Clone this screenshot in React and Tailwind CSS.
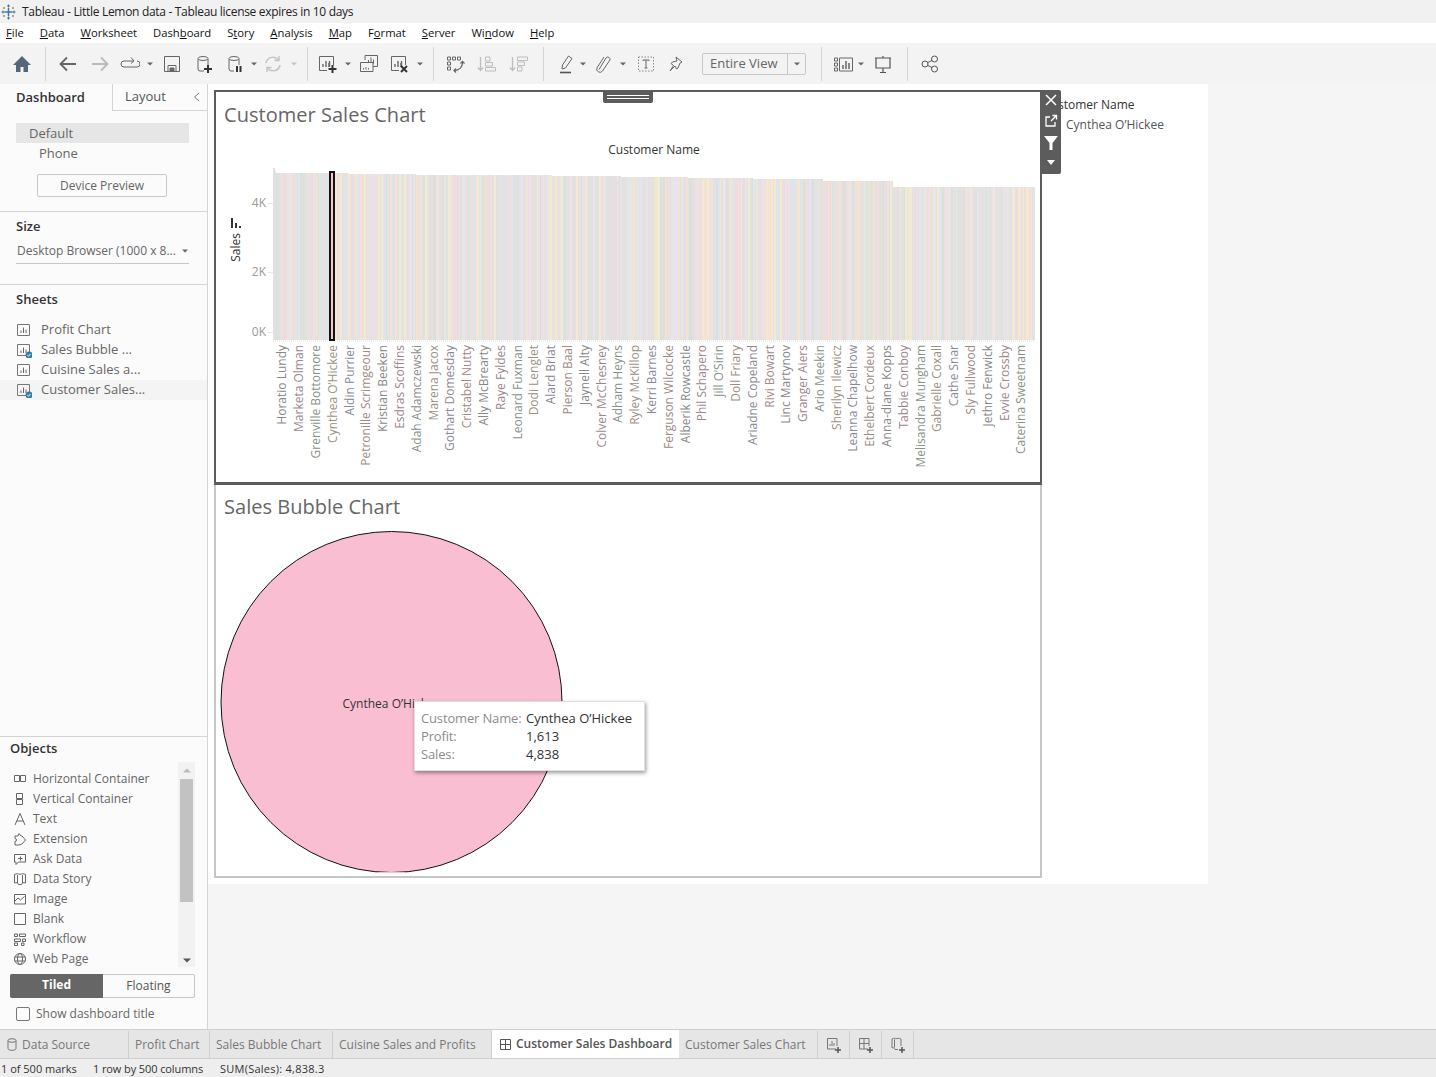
import React from 'react';

// Names shown on the x axis, colour classes cycle over them
const names = [
  'Horatio Lundy', 'Marketa Olman', 'Grenville Bottomore', 'Cynthea O\u2019Hickee', 'Aldin Purrier',
  'Petronille Scrimgeour', 'Kristian Beeken', 'Esdras Scoffins', 'Adah Adamczewski', 'Marena Jacox',
  'Gothart Domesday', 'Cristabel Nutty', 'Ally McBrearty', 'Raye Fyldes', 'Leonard Fuxman',
  'Dodi Lenglet', 'Alard Briat', 'Pierson Baal', 'Jaynell Alty', 'Colver McChesney',
  'Adham Heyns', 'Ryley McKillop', 'Kerri Barnes', 'Ferguson Wilcocke', 'Alberik Rowcastle',
  'Phil Schapero', 'Jill O\u2019Sirin', 'Doll Friary', 'Ariadne Copeland', 'Rivi Bowart',
  'Linc Martynov', 'Granger Aiers', 'Ario Meekin', 'Sherilyn Ilewicz', 'Leanna Chapelhow',
  'Ethelbert Cordeux', 'Anna-diane Kopps', 'Tabbie Conboy', 'Melisandra Mungham', 'Gabrielle Coxall',
  'Cathe Snar', 'Sly Fullwood', 'Jethro Fenwick', 'Evvie Crossby', 'Caterina Sweetnam',
];
const labelColors = ['text-[#888888]', 'text-[#9c868d]', 'text-[#87938a]', 'text-[#9a9283]', 'text-[#8a8997]', 'text-[#a08986]'];

const barColors = ['#e3e3e3', '#e6e6e6', '#e1e1e4', '#f1dcdc', '#dde4da', '#f1ebd4', '#e7dde4', '#dde4ea', '#f4e2d2', '#d8e2da', '#e8e4ea', '#eedfe2'];

// top of the bars, in steps, as in the sorted chart
const barTop = (x) => {
  if (x < 1) return 168;
  if (x < 3) return 171;
  if (x < 76) return 172.7;
  if (x < 143) return 174;
  if (x < 278) return 175;
  if (x < 346) return 176;
  if (x < 414) return 177;
  if (x < 480) return 178;
  if (x < 550) return 179;
  if (x < 620) return 181;
  return 187;
};

const bars = [];
let seed = 17;
for (let i = 0; i < 500; i++) {
  seed = (Math.imul(seed, 1664525) + 1013904223) >>> 0;
  bars.push({ x: i * 1.524, color: barColors[(seed >>> 24) % barColors.length] });
}

const Ico = ({ children, w = 20, h = 20, stroke = '#666', className = '' }) => (
  <svg width={w} height={h} viewBox={`0 0 ${w} ${h}`} fill="none" stroke={stroke} strokeWidth="1" className={`shrink-0 ${className}`}>
    {children}
  </svg>
);

const Caret = ({ className = '', color = '#666' }) => (
  <svg width="6" height="4" viewBox="0 0 6 4" className={`shrink-0 ${className}`}><path d="M0 0.5h6L3 3.5z" fill={color} /></svg>
);

const Sep = ({ className = '' }) => <div className={`w-px h-[34px] bg-[#d4d4d4] shrink-0 ${className}`} />;

const BarGlyph = ({ x = 5, y = 12, color = '#666' }) => (
  <path d={`M${x} ${y}v-3M${x + 3} ${y}v-6M${x + 6} ${y}v-4`} stroke={color} strokeWidth="1.4" />
);

const Plus = ({ x, y }) => <path d={`M${x - 4} ${y}h8M${x} ${y - 4}v8`} stroke="#333" strokeWidth="2" />;

const Toolbar = () => (
  <div className="h-[41px] bg-[#f3f3f3] flex items-center shrink-0">
    <Ico className="ml-[12px]" stroke="none"><path d="M10 2 1 11h3v7h4.500v-5h3v5H16v-7h3z" fill="#546778" /></Ico>
    <Sep className="ml-[13px]" />
    <Ico className="ml-[12px]" stroke="#666"><path d="M18 10H3M9 3.500 2.500 10 9 16.500" strokeWidth="1.800" /></Ico>
    <Ico className="ml-[12px]" stroke="#bbb"><path d="M2 10h15M11 3.500 17.500 10 11 16.500" strokeWidth="1.800" /></Ico>
    <Ico className="ml-[10px]"><path d="M13 7H4a3 3 0 0 0 0 6h13a2.500 2.500 0 0 0 0-6" /><path d="M11 3.500 14 7l-3 2.500" /></Ico>
    <Caret className="ml-[7px]" />
    <Ico className="ml-[9px]"><path d="M2.500 2.500h15v15h-15z" /><path d="M6 17.500v-6h8v6" /><path d="M8 14h4v3.500H8z" fill="#666" /></Ico>
    <Ico className="ml-[12px]"><path d="M4 5v10a2 2 0 0 0 2 2h4M14 5v6" /><ellipse cx="9" cy="4.500" rx="5" ry="2" /><Plus x={14} y={15} /></Ico>
    <Ico className="ml-[11px]"><path d="M4 5v10a2 2 0 0 0 2 2h3M14 5v6" /><ellipse cx="9" cy="4.500" rx="5" ry="2" /><path d="M12 12v6M15.500 12v6" stroke="#333" strokeWidth="2" /></Ico>
    <Caret className="ml-[6px]" />
    <Ico className="ml-[6px]" stroke="#c4c4c4"><path d="M3 9a7 7 0 0 1 12.500-3M17 11a7 7 0 0 1-12.500 3" strokeWidth="1.500" /><path d="M16 2v4.500h-4.500M4 18v-4.500h4.500" strokeWidth="1.500" /></Ico>
    <Caret className="ml-[8px]" color="#c4c4c4" />
    <Sep className="ml-[10px]" />
    <Ico className="ml-[10px]"><path d="M15.500 11V2.500h-14v14H9" /><BarGlyph x={5} y={13} /><path d="M11.500 13V7" strokeWidth="1.400" /><Plus x={14.500} y={15} /></Ico>
    <Caret className="ml-[7px]" />
    <Ico className="ml-[8px]"><path d="M6 6V1.500h12.500v11H14" /><path d="M9.500 9.500V6M12 9.500V3.500M14.500 9.500V5.500" strokeWidth="1" /><path d="M1.500 8.500H14v9H1.500z" fill="#f3f3f3" /><path d="M4.500 15.500V14M7 15.500V13M9.500 15.500v-1.500" strokeWidth="1" /></Ico>
    <Ico className="ml-[11px]"><path d="M15.500 11V2.500h-14v14H9" /><BarGlyph x={5} y={13} /><path d="M11.500 13V7" strokeWidth="1.400" /><path d="M11 12l6 6M17 12l-6 6" stroke="#333" strokeWidth="2" /></Ico>
    <Caret className="ml-[7px]" />
    <Sep className="ml-[10px]" />
    <Ico className="ml-[11px]"><path d="M2.500 3h3v3h-3zM7.500 3h3v3h-3zM12.500 3h3v3h-3zM2.500 8h3v3h-3zM2.500 13h3v3h-3z" /><path d="M17.500 8c0 5-3 8.500-8.500 8.500" strokeWidth="1.300" /><path d="M15.500 9.500l2-2 2 2M11 14.500l-2 2 2 2" strokeWidth="1.300" /></Ico>
    <Ico className="ml-[12px]" stroke="#bdbdbd"><path d="M3.500 3v13M1 13.500 3.500 16.500 6 13.500" strokeWidth="1.300" /><path d="M8.500 3h4.500v4H8.500zM8.500 8.500h7v3.500h-7zM8.500 13.500h10v3.500h-10z" /></Ico>
    <Ico className="ml-[12px]" stroke="#bdbdbd"><path d="M3.500 3v13M1 13.500 3.500 16.500 6 13.500" strokeWidth="1.300" /><path d="M8.500 3h10v3.500h-10zM8.500 8h7v3.500h-7zM8.500 13h4.500v4H8.500z" /></Ico>
    <Sep className="ml-[14px]" />
    <Ico className="ml-[12px]"><path d="M12.500 2 16 4.500 9.500 14 6 15l.5-4z" /><path d="M4 18.500h11" stroke="#555" strokeWidth="1.600" /></Ico>
    <Caret className="ml-[4px]" />
    <Ico className="ml-[7px]"><path d="M6 15.500 13 4a2.200 2.200 0 0 1 3.800 2.200L9.500 17a3.200 3.200 0 0 1-5.500-3.200L11 3" /></Ico>
    <Caret className="ml-[7px]" />
    <Ico className="ml-[10px]"><path d="M2.500 3h15v14h-15z" strokeDasharray="1.500 1.500" stroke="#888" /><path d="M7 7V6h6v1M10 6v8M8.500 14h3" /></Ico>
    <Ico className="ml-[10px]"><path d="M10 3l6 5-2 1-2 5-1.500 1L9 12l-5 5 3.500-5.500L5 9.500l1.500-1.500 4.500-1z" /></Ico>
    <div className="ml-[16px] w-[104px] h-[22px] border border-[#c8c8c8] rounded-[2px] flex items-center shrink-0">
      <span className="pl-[7px] w-[84px] text-[13px] text-[#666]">Entire View</span>
      <div className="flex-1 h-full border-l border-[#c8c8c8] flex items-center justify-center"><Caret /></div>
    </div>
    <Sep className="ml-[15px]" />
    <Ico className="ml-[11px]"><path d="M1.500 4h3v3h-3zM1.500 9h3v3h-3zM1.500 14h3v3h-3z" /><path d="M6.500 4h13v13h-13z" /><path d="M10 15v-4M13 15V7M16 15v-6" strokeWidth="1.500" /></Ico>
    <Caret className="ml-[5px]" />
    <Ico className="ml-[9px]" stroke="#555"><path d="M2 4h16M3 4v10h14V4M10 14v4M7 18.500h6M10 2v2" strokeWidth="1.200" /></Ico>
    <Sep className="ml-[14px]" />
    <Ico className="ml-[12px]" stroke="#555"><circle cx="5" cy="10" r="3" /><circle cx="14.500" cy="5" r="3" /><circle cx="14.500" cy="15" r="3" /><path d="M7.700 8.600 12 6.400M7.700 11.400 12 13.600" /></Ico>
  </div>
);

const menu = [
  ['', 'F', 'ile'], ['', 'D', 'ata'], ['', 'W', 'orksheet'], ['Dash', 'b', 'oard'], ['S', 't', 'ory'], ['', 'A', 'nalysis'],
  ['', 'M', 'ap'], ['F', 'o', 'rmat'], ['', 'S', 'erver'], ['Wi', 'n', 'dow'], ['', 'H', 'elp'],
];

const SheetIcon = ({ badge }) => (
  <svg width="16" height="16" viewBox="0 0 16 16" fill="none" className="shrink-0">
    <path d="M1.500 2.500h12v11h-12z" stroke="#777" />
    <path d="M5 11V8.500M7.500 11V5.500M10 11V7.500" stroke="#666" />
    {badge && <circle cx="13" cy="13" r="3.500" fill="#2f7fa8" />}
    {badge && <path d="M11.300 13l1.200 1.200 2-2.200" stroke="#fff" />}
  </svg>
);

const sheets = [
  { name: 'Profit Chart' },
  { name: 'Sales Bubble ...', badge: true },
  { name: 'Cuisine Sales a...' },
  { name: 'Customer Sales...', badge: true, active: true },
];

const objects = [
  ['Horizontal Container', <g key="a"><path d="M1.500 3.500h5v6h-5zM7.500 3.500h5v6h-5z" /></g>],
  ['Vertical Container', <g key="a"><path d="M3.500 1.500h6v5h-6zM3.500 7.500h6v5h-6z" /></g>],
  ['Text', <path key="a" d="M2 13 7 1.500 12 13M3.800 9h6.400" />],
  ['Extension', <path key="a" d="M2 13V9.500a1.500 1.500 0 0 0 0-3V4h3l1-2.500L8 4h1l3.500 4L9 12l-3 1z" />],
  ['Ask Data', <path key="a" d="M1.500 2.500h11v7.500H5.500L3 12.500V10H1.500zM5 6.500h4.500M7.500 4.500v4" />],
  ['Data Story', <path key="a" d="M1.500 2.500c2-1 4-1 5.500 0 1.500-1 3.500-1 5.500 0v8.500c-2-.5-3.500-.5-4 1.500h-3c-.5-2-2-2-4-1.500zM4.500 3v8M9.500 3v8" />],
  ['Image', <path key="a" d="M1.500 2.500h11v9.500h-11zM2 9l3-3 2.500 2 4-3.500" />],
  ['Blank', <path key="a" d="M1.500 1.500h11v11h-11z" />],
  ['Workflow', <path key="a" d="M1.500 2h3v2.500h-3zM6.500 2h6v2.500h-6zM1.500 7h6v2.500h-6zM9.500 7h3v2.500h-3zM1.500 11h3v2.500h-3zM8.500 11h2.500v2.500H8.500z" />],
  ['Web Page', <g key="a"><circle cx="7" cy="7" r="5.500" /><ellipse cx="7" cy="7" rx="2.500" ry="5.500" /><path d="M1.500 5h11M1.500 9h11" /></g>],
];

const Sidebar = () => (
  <div className="w-[208px] shrink-0 bg-[#fbfbfb] border-r border-[#d4d4d4] flex flex-col text-[12px] text-[#666]">
    <div className="h-[27px] flex shrink-0">
      <div className="w-[112px] pl-[16px] pt-[4px] font-semibold text-[13px] text-[#333]">Dashboard</div>
      <div className="flex-1 flex items-center justify-between border-l border-b border-[#d4d4d4] pl-[12px] pr-[7px]">
        <span className="text-[13px] text-[#555]">Layout</span>
        <svg width="7" height="10" viewBox="0 0 7 10" fill="none"><path d="M6 1 1.500 5 6 9" stroke="#777" /></svg>
      </div>
    </div>
    <div className="h-[101px] border-b border-[#d4d4d4] shrink-0 pt-[12px]">
      <div className="ml-[16px] w-[173px] h-[20px] bg-[#e6e6e6] pl-[13px] text-[13px] leading-[20px]">Default</div>
      <div className="pl-[39px] h-[20px] text-[13px] leading-[20px]">Phone</div>
      <div className="ml-[37px] mt-[11px] w-[130px] h-[23px] border border-[#c8c8c8] rounded-[2px] text-center leading-[21px]">Device Preview</div>
    </div>
    <div className="h-[73px] border-b border-[#d4d4d4] shrink-0 pl-[16px] pt-[5px]">
      <div className="font-semibold text-[13px] text-[#333] h-[18px] leading-[18px]">Size</div>
      <div className="mt-[7px] w-[173px] h-[22px] border-b border-[#c8c8c8] flex items-center justify-between pl-[1px] pb-[3px]">
        <span>Desktop Browser (1000 x 8...</span>
        <Caret className="mr-[1px]" />
      </div>
    </div>
    <div className="flex-1 min-h-0 pt-[4px] border-b border-[#d4d4d4]">
      <div className="pl-[16px] font-semibold text-[13px] text-[#333] h-[20px] leading-[20px]">Sheets</div>
      <div className="mt-[11px]">
        {sheets.map((s) => (
          <div key={s.name} className={`h-[20px] flex items-center pl-[16px] gap-[9px] text-[13px] ${s.active ? 'bg-[#f4f4f4]' : ''}`}>
            <SheetIcon badge={s.badge} />
            <span>{s.name}</span>
          </div>
        ))}
      </div>
    </div>
    <div className="h-[292px] shrink-0 pt-[1px]">
      <div className="pl-[10px] font-semibold text-[13px] text-[#333] h-[20px] leading-[20px]">Objects</div>
      <div className="mt-[4px] ml-[10px] w-[185px] h-[205px] flex">
        <div className="flex-1 pt-[7px]">
          {objects.map(([label, icon]) => (
            <div key={label} className="h-[20px] flex items-center pl-[3px] gap-[6px]">
              <svg width="14" height="14" viewBox="0 0 14 14" fill="none" stroke="#666" className="shrink-0">{icon}</svg>
              <span className="whitespace-nowrap">{label}</span>
            </div>
          ))}
        </div>
        <div className="w-[17px] bg-[#f2f2f2] flex flex-col items-center">
          <div className="h-[17px] flex items-center"><svg width="8" height="5" viewBox="0 0 8 5"><path d="M0 4.500h8L4 .5z" fill="#bbb" /></svg></div>
          <div className="w-[13px] h-[123px] bg-[#c2c2c2]" />
          <div className="mt-auto h-[14px] flex items-center"><svg width="8" height="5" viewBox="0 0 8 5"><path d="M0 .5h8L4 4.500z" fill="#555" /></svg></div>
        </div>
      </div>
      <div className="mt-[7px] ml-[10px] w-[185px] h-[24px] flex rounded-[2px] border border-[#c8c8c8] text-[12px]">
        <div className="w-[93px] bg-[#666] text-white font-bold text-center leading-[22px] -ml-px -my-px h-[24px] rounded-l-[2px]">Tiled</div>
        <div className="flex-1 text-center leading-[22px] text-[#555]">Floating</div>
      </div>
      <div className="mt-[7px] ml-[16px] flex items-center gap-[6px]">
        <div className="w-[14px] h-[14px] border border-[#777] rounded-[2px] bg-white" />
        <span>Show dashboard title</span>
      </div>
    </div>
  </div>
);

const ZoneTitle = ({ children }) => (
  <div className="h-[24px] pl-[8px] text-[20px] leading-[24px] text-[#666] whitespace-nowrap tracking-[0.03px]">{children}</div>
);

const Tick = ({ label, className }) => (
  <div className={`w-max flex items-center gap-[2px] h-[14px] ${className}`}>
    <span>{label}</span>
    <div className="w-[5px] h-px bg-[#e6e6e6] shrink-0" />
  </div>
);

const BarChart = () => (
  <div className="flex h-[182px]">
    <div className="w-[57px] shrink-0 flex">
      <div className="w-[40px] shrink-0 flex flex-col items-center pt-[58px]">
        <svg width="12" height="10" viewBox="0 0 12 10"><path d="M1 10V0h2v10zM5 10V5h2v5zM9 10V8h2v2z" fill="#333" /></svg>
        <span className="mt-[5px] [writing-mode:vertical-rl] rotate-180 text-[12px] leading-[14px] text-[#333]">Sales</span>
      </div>
      <div className="flex-1 min-w-0 flex flex-col items-end text-[12px] leading-[14px] text-[#999]">
        <Tick label="4K" className="mt-[36px]" />
        <Tick label="2K" className="mt-[55px]" />
        <Tick label="0K" className="mt-[46px]" />
      </div>
    </div>
    <svg width="763" height="182" viewBox="0 160 763 182" className="shrink-0" shapeRendering="crispEdges">
      {bars.map((b, i) => (
        <rect key={i} x={b.x} y={barTop(b.x)} width="1.6" height={340 - barTop(b.x)} fill={b.color} />
      ))}
      <path d="M0 341h762" stroke="#efefef" strokeWidth="2" strokeDasharray="1 1" />
      <rect x="57" y="172" width="4" height="168" fill="#fabfd2" stroke="#111" strokeWidth="2" />
    </svg>
  </div>
);

const Zones = () => (
  <div className="w-[828px] shrink-0 flex flex-col">
    <div className="relative h-[395px] border-2 border-[#5c5c5c] border-b-[3px]">
      <div className="absolute left-[387px] -top-[2px] w-[50px] h-[13px] bg-[#5c5c5c] rounded-b-[2px] flex flex-col items-center justify-center gap-[2px]">
        <div className="w-[42px] h-px bg-white" />
        <div className="w-[42px] h-px bg-white" />
      </div>
      <div className="absolute left-[825px] -top-[2px] w-[20px] h-[84px] bg-[#5c5c5c] rounded-r-[2px] flex flex-col items-center pt-[3px] z-10">
        <svg width="14" height="14" viewBox="0 0 14 14"><path d="M2 2l10 10M12 2 2 12" stroke="#fff" strokeWidth="1.500" /></svg>
        <svg width="14" height="14" viewBox="0 0 14 14" fill="none" className="mt-[7px]"><path d="M6 3H2v9h9V8M7 7l5-5M8.500 1.500H12.500V5.500" stroke="#fff" strokeWidth="1.300" /></svg>
        <svg width="14" height="14" viewBox="0 0 14 14" className="mt-[8px]"><path d="M0 0h14L8.500 7v7h-3V7z" fill="#fff" /></svg>
        <svg width="8" height="5" viewBox="0 0 8 5" className="mt-[10px]"><path d="M0 0h8L4 5z" fill="#fff" /></svg>
      </div>
      <div className="pt-[11px]"><ZoneTitle>Customer Sales Chart</ZoneTitle></div>
      <div className="ml-[57px] w-[762px] mt-[13px] h-[20px] text-center text-[12px] leading-[20px] text-[#333]">Customer Name</div>
      <BarChart />
      <div className="flex pl-[58px] mt-[3px]">
        {names.map((n, i) => (
          <div key={n} className="w-[16.8px] shrink-0 flex justify-center items-start">
            <span className={`[writing-mode:vertical-rl] rotate-180 text-[12px] leading-[14px] whitespace-nowrap ${labelColors[i % labelColors.length]}`}>{n}</span>
          </div>
        ))}
      </div>
    </div>
    <div className="relative h-[393px] border-2 border-t-0 border-[#c6c6c6]">
      <div className="pt-[10px]"><ZoneTitle>Sales Bubble Chart</ZoneTitle></div>
      <div className="relative ml-[4px] mt-[12px] w-[343px] h-[342px]">
        <svg width="343" height="342" viewBox="0 0 343 342" className="block">
          <circle cx="171.500" cy="171" r="170.500" fill="#fabed3" stroke="#111" />
          <path d="M158 341.500h27" stroke="#fabed3" strokeWidth="1" />
        </svg>
        <div className="absolute inset-0 pt-[4px] flex items-center justify-center text-[12px] text-[#333]">Cynthea O{'\u2019'}Hickee</div>
      </div>
      <div className="absolute left-[198px] top-[216px] w-[231px] h-[70px] bg-white shadow-[1px_2px_4px_rgba(0,0,0,0.4)] border border-[#e0e0e0] pl-[6px] pt-[7px] text-[13px] leading-[18px]">
        {[['Customer Name:', 'Cynthea O\u2019Hickee'], ['Profit:', '1,613'], ['Sales:', '4,838']].map(([k, v]) => (
          <div key={k} className="flex">
            <span className="w-[105px] text-[#8c8c8c] whitespace-nowrap tracking-[-0.15px]">{k}</span>
            <span className="text-[#333] whitespace-nowrap">{v}</span>
          </div>
        ))}
      </div>
    </div>
  </div>
);

const Legend = () => (
  <div className="flex-1 pl-[1px] pt-[6px] text-[12px]">
    <div className="h-[18px] leading-[18px] text-[#333]">Customer Name</div>
    <div className="mt-[2px] pl-[23px] h-[18px] leading-[18px] text-[#555]">Cynthea O{'\u2019'}Hickee</div>
  </div>
);

const tabs = [
  { label: 'Profit Chart', w: 'w-[81px]' },
  { label: 'Sales Bubble Chart', w: 'w-[123px]' },
  { label: 'Cuisine Sales and Profits', w: 'w-[159px]' },
];

const TabBar = () => (
  <div className="h-[30px] shrink-0 bg-[#e6e6e6] border-t border-b border-[#cfcfcf] flex items-stretch text-[12px] text-[#777] pt-px">
    <div className="w-[129px] border-r border-[#cfcfcf] flex items-center pl-[7px] gap-[5px] shrink-0">
      <svg width="10" height="13" viewBox="0 0 10 13" fill="none" stroke="#777"><ellipse cx="5" cy="2.500" rx="4" ry="1.800" /><path d="M1 2.500v8c0 1 1.500 1.800 4 1.800s4-.8 4-1.800v-8" /></svg>
      <span>Data Source</span>
    </div>
    {tabs.map((t) => (
      <div key={t.label} className={`${t.w} border-r border-[#cfcfcf] flex items-center pl-[6px] shrink-0 whitespace-nowrap`}>{t.label}</div>
    ))}
    <div className="w-[187px] bg-white flex items-center pl-[8px] gap-[5px] font-semibold text-[#555] shrink-0 whitespace-nowrap -mt-px">
      <svg width="11" height="11" viewBox="0 0 11 11" fill="none" stroke="#555"><path d="M.5.500h10v10H.5zM5.500.500v10M.5 5.500h10" /></svg>
      <span>Customer Sales Dashboard</span>
    </div>
    <div className="w-[139px] border-r border-[#cfcfcf] flex items-center pl-[6px] shrink-0 whitespace-nowrap">Customer Sales Chart</div>
    <div className="w-[32px] border-r border-[#cfcfcf] flex items-center justify-center shrink-0">
      <svg width="16" height="16" viewBox="0 0 16 16" fill="none"><path d="M10 12H1.500V1.500h9.500V9" stroke="#777" /><path d="M4 9V7M6 9V4M8 9V6" stroke="#777" /><path d="M9 13h6M12 10v6" stroke="#555" strokeWidth="1.500" /></svg>
    </div>
    <div className="w-[32px] border-r border-[#cfcfcf] flex items-center justify-center shrink-0">
      <svg width="16" height="16" viewBox="0 0 16 16" fill="none"><path d="M10 12H1.500V1.500h9.500V9M6 1.500V12M1.500 6.500H11" stroke="#777" /><path d="M9 13h6M12 10v6" stroke="#555" strokeWidth="1.500" /></svg>
    </div>
    <div className="w-[32px] border-r border-[#cfcfcf] flex items-center justify-center shrink-0">
      <svg width="16" height="16" viewBox="0 0 16 16" fill="none"><path d="M2 2c2-1 3-1 4 0 1-1 3-1 5 0v7M2 2v9c1-.5 2.500-.5 3 1.500h3M4.500 2.500v8" stroke="#777" /><path d="M9 13h6M12 10v6" stroke="#555" strokeWidth="1.500" /></svg>
    </div>
  </div>
);

export default function App() {
  return (
    <div className="w-[1436px] h-[1077px] overflow-hidden flex flex-col bg-[#f5f5f5] font-['Open_Sans',sans-serif] text-[#333]">
      <div className="h-[23px] bg-[#f1f1f1] flex items-center shrink-0 pl-[1px] gap-[6px] text-[12px] text-[#222]">
        <svg width="15" height="16" viewBox="0 0 15 16" fill="none" stroke="#3f78a8" strokeWidth="1">
          <path d="M7.500 4v8M3.500 8h8" strokeWidth="1.500" />
          <path d="M7.500 .5v3M6 2h3M7.500 12.500v3M6 14h3M.5 8h3M2 6.500v3M11.500 8h3M13 6.500v3" />
          <path d="M3 3v2M2 4h2M12 3v2M11 4h2M3 11v2M2 12h2M12 11v2M11 12h2" stroke="#c07c4a" />
        </svg>
        <span className="pt-px tracking-[-0.31px]">Tableau - Little Lemon data - Tableau license expires in 10 days</span>
      </div>
      <div className="h-[20px] bg-white flex items-center shrink-0 pl-[6px] gap-[16px] text-[11.25px] text-[#111]">
        {menu.map(([a, b, c]) => (
          <span key={a + b + c}>{a}<span className="underline">{b}</span>{c}</span>
        ))}
      </div>
      <Toolbar />
      <div className="flex-1 min-h-0 flex">
        <Sidebar />
        <div className="flex-1 min-w-0">
          <div className="w-[1000px] h-[800px] bg-white p-[6px] flex">
            <Zones />
            <Legend />
          </div>
        </div>
      </div>
      <TabBar />
      <div className="h-[18px] shrink-0 bg-[#eeeeee] flex items-center pl-[1px] pt-[3px] text-[11px] text-[#333]">
        <span className="w-[92px]">1 of 500 marks</span>
        <span className="w-[127px] tracking-[-0.1px]">1 row by 500 columns</span>
        <span className="tracking-[0.25px]">SUM(Sales): 4,838.3</span>
      </div>
    </div>
  );
}
